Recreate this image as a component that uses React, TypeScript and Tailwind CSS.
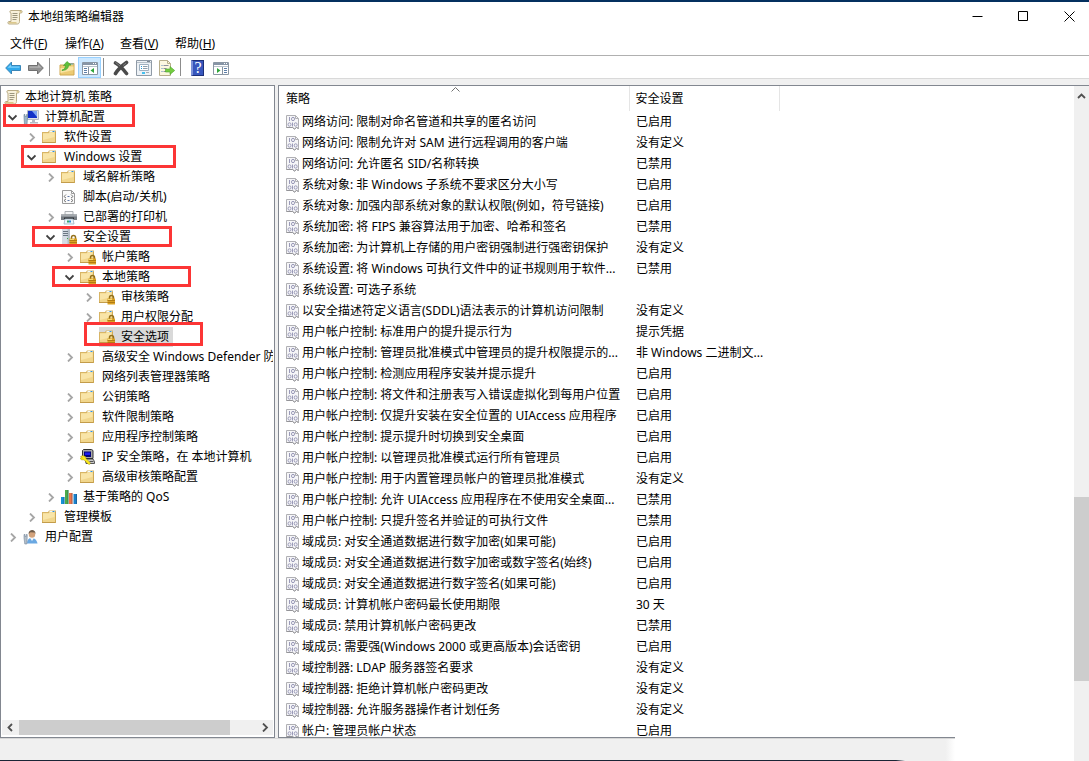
import { useState } from "react";
import type { ReactNode } from "react";
import clsx from "clsx";

type IconName =
  | "scroll"
  | "computer"
  | "folder"
  | "script"
  | "printer"
  | "server"
  | "lockedFolder"
  | "ipsec"
  | "chart"
  | "user";

type TreeNode = {
  label: string;
  icon: IconName;
  depth: number;
  state?: "open" | "closed";
  // outline drawn over the row
  mark?: string;
};

const tree: TreeNode[] = [
  { label: "本地计算机 策略", icon: "scroll", depth: 0 },
  { label: "计算机配置", icon: "computer", depth: 1, state: "open", mark: "left-[2px] w-[132px] -top-[3px] h-[23px]" },
  { label: "软件设置", icon: "folder", depth: 2, state: "closed" },
  { label: "Windows 设置", icon: "folder", depth: 2, state: "open", mark: "left-[20px] w-[155px] -top-[2px] h-[23px]" },
  { label: "域名解析策略", icon: "folder", depth: 3, state: "closed" },
  { label: "脚本(启动/关机)", icon: "script", depth: 3 },
  { label: "已部署的打印机", icon: "printer", depth: 3, state: "closed" },
  { label: "安全设置", icon: "server", depth: 3, state: "open", mark: "left-[31px] w-[140px] -top-px h-[21px]" },
  { label: "帐户策略", icon: "lockedFolder", depth: 4, state: "closed" },
  { label: "本地策略", icon: "lockedFolder", depth: 4, state: "open", mark: "left-[51px] w-[139px] -top-px h-[21px]" },
  { label: "审核策略", icon: "lockedFolder", depth: 5, state: "closed" },
  { label: "用户权限分配", icon: "lockedFolder", depth: 5, state: "closed" },
  { label: "安全选项", icon: "lockedFolder", depth: 5, mark: "left-[83px] w-[119px] -top-[5px] h-[24px]" },
  { label: "高级安全 Windows Defender 防火墙", icon: "folder", depth: 4, state: "closed" },
  { label: "网络列表管理器策略", icon: "folder", depth: 4 },
  { label: "公钥策略", icon: "folder", depth: 4, state: "closed" },
  { label: "软件限制策略", icon: "folder", depth: 4, state: "closed" },
  { label: "应用程序控制策略", icon: "folder", depth: 4, state: "closed" },
  { label: "IP 安全策略，在 本地计算机", icon: "ipsec", depth: 4, state: "closed" },
  { label: "高级审核策略配置", icon: "folder", depth: 4, state: "closed" },
  { label: "基于策略的 QoS", icon: "chart", depth: 3, state: "closed" },
  { label: "管理模板", icon: "folder", depth: 2, state: "closed" },
  { label: "用户配置", icon: "user", depth: 1, state: "closed" },
];

const indent = ["pl-[3px]", "pl-1", "pl-[23px]", "pl-[42px]", "pl-[61px]", "pl-[80px]"];

const policies: [string, string][] = [
  ["网络访问: 限制对命名管道和共享的匿名访问", "已启用"],
  ["网络访问: 限制允许对 SAM 进行远程调用的客户端", "没有定义"],
  ["网络访问: 允许匿名 SID/名称转换", "已禁用"],
  ["系统对象: 非 Windows 子系统不要求区分大小写", "已启用"],
  ["系统对象: 加强内部系统对象的默认权限(例如，符号链接)", "已启用"],
  ["系统加密: 将 FIPS 兼容算法用于加密、哈希和签名", "已禁用"],
  ["系统加密: 为计算机上存储的用户密钥强制进行强密钥保护", "没有定义"],
  ["系统设置: 将 Windows 可执行文件中的证书规则用于软件...", "已禁用"],
  ["系统设置: 可选子系统", ""],
  ["以安全描述符定义语言(SDDL)语法表示的计算机访问限制", "没有定义"],
  ["用户帐户控制: 标准用户的提升提示行为", "提示凭据"],
  ["用户帐户控制: 管理员批准模式中管理员的提升权限提示的...", "非 Windows 二进制文..."],
  ["用户帐户控制: 检测应用程序安装并提示提升", "已启用"],
  ["用户帐户控制: 将文件和注册表写入错误虚拟化到每用户位置", "已启用"],
  ["用户帐户控制: 仅提升安装在安全位置的 UIAccess 应用程序", "已启用"],
  ["用户帐户控制: 提示提升时切换到安全桌面", "已启用"],
  ["用户帐户控制: 以管理员批准模式运行所有管理员", "已启用"],
  ["用户帐户控制: 用于内置管理员帐户的管理员批准模式", "没有定义"],
  ["用户帐户控制: 允许 UIAccess 应用程序在不使用安全桌面...", "已禁用"],
  ["用户帐户控制: 只提升签名并验证的可执行文件", "已禁用"],
  ["域成员: 对安全通道数据进行数字加密(如果可能)", "已启用"],
  ["域成员: 对安全通道数据进行数字加密或数字签名(始终)", "已启用"],
  ["域成员: 对安全通道数据进行数字签名(如果可能)", "已启用"],
  ["域成员: 计算机帐户密码最长使用期限", "30 天"],
  ["域成员: 禁用计算机帐户密码更改", "已禁用"],
  ["域成员: 需要强(Windows 2000 或更高版本)会话密钥", "已启用"],
  ["域控制器: LDAP 服务器签名要求", "没有定义"],
  ["域控制器: 拒绝计算机帐户密码更改", "没有定义"],
  ["域控制器: 允许服务器操作者计划任务", "没有定义"],
  ["帐户: 管理员帐户状态", "已启用"],
];

function Svg({ children, className }: { children: ReactNode; className?: string }) {
  return (
    <svg viewBox="0 0 16 16" className={clsx("size-4 shrink-0", className)} fill="none" aria-hidden="true">
      {children}
    </svg>
  );
}

function FolderShape() {
  return (
    <>
      <path d="M0 3h6l1-1.500h7V14H0z" fill="#d8b566" />
      <path d="M7.500 2H13v2H7.500z" fill="#f0f7fb" />
      <path d="M10.500 2H12.500v1h-2z" fill="#2f8fd8" />
      <path d="M1 4h6l1-1h5.500v10.500H1z" fill="#f1d68c" />
      <path d="M1 4.500h6l1-1h4.500V8L1 11z" fill="#f9e5a8" />
      <path d="M0 13.500h14" stroke="#c39c4a" />
      <path d="M13.500 3v11" stroke="#cda855" />
    </>
  );
}

function Padlock() {
  return (
    <>
      <path d="M10.500 10V8.500a2 2 0 0 1 4 0V10" stroke="#94711c" strokeWidth="1.500" />
      <path d="M8.500 9.500H16v6H8.500z" fill="#dba224" />
      <path d="M8.500 11.500H16M8.500 13.500H16" stroke="#b17c14" />
      <path d="M9 10.500h4" stroke="#f6d873" />
    </>
  );
}

function TreeIcon({ name }: { name: IconName }) {
  switch (name) {
    case "scroll":
      return (
        <Svg>
          <path d="M4 1.500h10c1.500 0 1.500 2.500 0 2.500h-1.500v8.500c0 1.500-1 2.500-2 2.500H2c-1.500 0-1.500-2.500 0-2.500h2V4C2.500 4 2.500 1.500 4 1.500z" fill="#f8f1da" stroke="#b9ab84" />
          <path d="M12.500 3.500h1.500c1 0 1-1.500 0-1.500h-1.500z" fill="#dcc88c" />
          <path d="M2 13h7.500v1.500H2z" fill="#dcc88c" />
          <path d="M5.500 4.500h5M5.500 6.500h5M5.500 8.500h5M5.500 10.500h4" stroke="#9c967e" />
        </Svg>
      );
    case "computer":
      return (
        <Svg>
          <path d="M4.500 1.500h11v9h-11z" fill="#dfe3ea" stroke="#b4bac4" />
          <path d="M5 2h9v7H5z" fill="#1230c8" />
          <path d="M9 2h5v6z" fill="#7ca2f2" />
          <path d="M9 11h3v2H9zM7 13h8v1.500H7z" fill="#b4bac4" />
          <path d="M1 5.500h1v2h1.500v-2h1v3L4 15.500H1.500L1 8.500z" fill="#9db6c8" stroke="#688296" strokeWidth=".6" />
        </Svg>
      );
    case "folder":
      return (
        <Svg>
          <FolderShape />
        </Svg>
      );
    case "lockedFolder":
      return (
        <Svg>
          <FolderShape />
          <Padlock />
        </Svg>
      );
    case "script":
      return (
        <Svg>
          <path d="M1.500 1.500h9l3 3v10h-12z" fill="#fafafa" stroke="#9a9a9a" />
          <path d="M10.500 1.500v3h3" stroke="#9a9a9a" />
          <path d="M5 5.500L3 7.500 5 9M10 5.500l2 2L10 9M5 10L3 11.500l2 1.500M10 10l2 1.500-2 1.500" stroke="#6c6c6c" strokeWidth=".9" />
          <path d="M6.500 7.500h2M6.500 11.500h2" stroke="#6078a8" />
        </Svg>
      );
    case "printer":
      return (
        <Svg>
          <path d="M4 2.500h8V6H4z" fill="#f4f5f6" stroke="#9ba0a5" strokeWidth=".8" />
          <path d="M0 5.500h16V11H0z" fill="#777d83" />
          <path d="M0 5.500h16v2H0z" fill="#a5aaaf" />
          <path d="M3 8.500h10v1.500H3z" fill="#2d3135" />
          <path d="M4 10h8l1 5H3z" fill="#edf6fb" stroke="#9cb0be" strokeWidth=".8" />
          <path d="M6 11.500h2v2H6z" fill="#39a36b" />
          <path d="M8 11.500h2v2H8z" fill="#2f8ed8" />
        </Svg>
      );
    case "server":
      return (
        <Svg>
          <path d="M1 0h8v15H1z" fill="#b4bec9" />
          <path d="M1 0h5.500v15H1z" fill="#d5dce4" />
          <path d="M2 2.500h5M2 4.500h5M2 6.500h5" stroke="#6a7683" />
          <path d="M6 9h1v1H6z" fill="#3fa84a" />
          <Padlock />
        </Svg>
      );
    case "ipsec":
      return (
        <Svg>
          <path d="M2.500 1.500l1-1h8l1.500 1v8H2.500z" fill="#a9a9a9" stroke="#333" />
          <path d="M4 2.500h7V8H4z" fill="#050578" />
          <path d="M5 3.500h5V6H5z" fill="#1c1cf0" />
          <path d="M5 10h8l1.500 2.500v2H6z" fill="#c8c8c8" stroke="#333" strokeWidth=".8" />
          <path d="M9.500 12.500h4" stroke="#555" />
          <path d="M.5 7.500L2.500 6.500l3 1 .5 2L10.500 14l-1 1.500L8 15l-4-4.200L1.500 11 0 9l2.200-.2z" fill="#fbe91c" stroke="#978600" strokeWidth=".4" />
        </Svg>
      );
    case "chart":
      return (
        <Svg>
          <path d="M0 8h3.500v7H0z" fill="#1693d6" />
          <path d="M4 1h3.500v14H4z" fill="#4bab4a" />
          <path d="M8 4h3.500v11H8z" fill="#f07446" />
          <path d="M12.500 5H16v10h-3.500z" fill="#1a80ca" />
          <path d="M3 8v7M7 1v14M11 4v11M15.500 5v10" stroke="#1c3f66" strokeOpacity=".4" />
        </Svg>
      );
    case "user":
      return (
        <Svg>
          <path d="M4 14.500C4 11 5.500 9 8.500 9s5 1.500 6 5.500z" fill="#6aa8e2" />
          <path d="M7 9l2 3 2-3z" fill="#f4f8fb" />
          <circle cx="9" cy="5.500" r="3.200" fill="#d3a37c" />
          <path d="M5.500 5c0-5.500 7.500-5.500 7 0l-1-1.500-4-.3z" fill="#6f5b48" />
          <path d="M1 5.500h1v2h1.200v-2h1v3L3.800 15H1.800L1 9z" fill="#b4bfc9" stroke="#76869a" strokeWidth=".6" />
        </Svg>
      );
  }
}

function PolicyIcon() {
  return (
    <svg viewBox="0 0 14 16" className="h-4 w-[14px] shrink-0" fill="none" aria-hidden="true">
      <path d="M.5 1.500h9l3 3v10l-2-1-2 1.500-2-1.500h-6z" fill="#f6f6f8" stroke="#b0b0b4" />
      <path d="M9.500 1.500v3h3" stroke="#b0b0b4" />
      <path d="M.5 13.500h6l2 1.500 2-1.500 2 1" stroke="#949498" />
      <path d="M3.500 3v4M6.500 8.500v4" stroke="#9a9ab8" />
      <ellipse cx="7" cy="5" rx="1.500" ry="1.700" stroke="#9a9ab8" />
      <ellipse cx="3.500" cy="10.500" rx="1.500" ry="1.700" stroke="#9a9ab8" />
      <ellipse cx="9.700" cy="10.500" rx="1.500" ry="1.700" stroke="#9a9ab8" />
    </svg>
  );
}

function Arrow({ dir, className }: { dir: "up" | "left" | "right" | "down"; className?: string }) {
  const d = {
    up: "M1 6l3.500-3.500L8 6",
    down: "M.5 2.500l4 4 4-4",
    left: "M6 1L2.500 4.500 6 8",
    right: "M3 .5l4 4-4 4",
  }[dir];
  return (
    <svg viewBox="0 0 9 9" className={clsx("size-[9px]", className)} fill="none" stroke="currentColor" strokeWidth="1.800" aria-hidden="true">
      <path d={d} />
    </svg>
  );
}

function PaneIcon({ flip }: { flip?: boolean }) {
  return (
    <Svg>
      <path d="M.5 2.500h15v12H.5z" fill="#fff" stroke="#8b97a4" />
      <path d="M1 3h14v2H1z" fill="#8795a6" />
      <path d="M11 3.500h1M13 3.500h1" stroke="#fff" />
      <path d="M1 6.500h14" stroke="#b9c2cc" />
      {flip ? (
        <>
          <path d="M9.500 7v7" stroke="#8592a0" />
          <path d="M4 8l3.500 2.500L4 13z" fill="#2fa53a" />
          <path d="M11 8.500h3M11 10.500h3M11 12.500h3" stroke="#5d7ea8" />
        </>
      ) : (
        <>
          <path d="M6.500 7v7" stroke="#8592a0" />
          <path d="M12 8l-3.500 2.500L12 13z" fill="#2fa53a" />
          <path d="M2 8.500h3M2 10.500h3M2 12.500h3" stroke="#5d7ea8" />
        </>
      )}
    </Svg>
  );
}

function ToolButton({ label, active, children }: { label: string; active?: boolean; children: ReactNode }) {
  return (
    <button
      type="button"
      aria-label={label}
      aria-pressed={active}
      className={clsx(
        "flex h-[21px] w-[23px] items-center justify-center border",
        active ? "border-[#99d1ff] bg-[#cce8ff]" : "border-transparent hover:bg-[#e5f3ff]"
      )}
    >
      {children}
    </button>
  );
}

function ToolSeparator() {
  return <span className="mr-[5px] ml-[2px] h-[18px] w-px self-center bg-[#8c8c8c]" />;
}

function Toolbar() {
  return (
    <div role="toolbar" className="flex h-[23px] items-end border-b border-[#d9d9d9] pl-px">
      <ToolButton label="后退">
        <Svg>
          <path d="M.7 8L6.500 2v3.500h9v5h-9V14z" fill="#2fa9ec" stroke="#3a86b8" />
          <path d="M2.500 7.800L6 4.500v2h8.500v1.300z" fill="#7fd0fa" />
        </Svg>
      </ToolButton>
      <ToolButton label="前进">
        <Svg>
          <path d="M15.300 8L9.500 2v3.500h-9v5h9V14z" fill="#929292" stroke="#707070" />
          <path d="M13.500 7.800L10 4.500v2H1.500v1.300z" fill="#b5b5b5" />
        </Svg>
      </ToolButton>
      <ToolSeparator />
      <ToolButton label="向上">
        <Svg>
          <path d="M1 5h6l1-1.500h7V15H1z" fill="#eccb74" stroke="#d0a850" />
          <path d="M11 3.500h3.500v1H11z" fill="#58a9df" />
          <path d="M1.500 8H8l1-1.500h5.500V10l-13 3z" fill="#fae5a4" />
          <path d="M3 10C5.500 9.500 6.500 7.500 6.500 5.500h-2L8 1.500l4 3.500-2.500.3C9.500 8.500 7 10.500 3 10.500z" fill="#5fc03c" stroke="#3b9a28" strokeWidth=".6" />
        </Svg>
      </ToolButton>
      <ToolButton label="显示/隐藏控制台树" active>
        <PaneIcon />
      </ToolButton>
      <ToolSeparator />
      <ToolButton label="删除">
        <Svg>
          <path d="M2.500 3c3 1.500 7.500 6 11 10.500M13.500 2.500C10 5 5 9.500 2.500 13.500" stroke="#4a4a4a" strokeWidth="3.600" strokeLinecap="round" />
          <path d="M2.500 2.500L7 6M13 3l-3 2.500" stroke="#808080" strokeWidth="1" />
        </Svg>
      </ToolButton>
      <ToolButton label="属性">
        <Svg>
          <path d="M.5.5h15v15H.5z" fill="#edf1f5" stroke="#8f9aa6" />
          <path d="M1 2.500h14" stroke="#b5bfc9" />
          <path d="M11 1.500h3" stroke="#7d8894" />
          <path d="M3.500 4.500h9v6h-9z" fill="#fff" stroke="#9fb0c0" />
          <path d="M5 6.500h1M5 8.500h1" stroke="#2196d8" />
          <path d="M7 6.500h4.500M7 8.500h4.500" stroke="#8f9dab" />
          <path d="M6 12h3v2H6z" fill="#43c0f0" />
          <path d="M10 12.500h3" stroke="#a4adb6" />
        </Svg>
      </ToolButton>
      <ToolButton label="导出列表">
        <Svg>
          <path d="M.5.5h8l3 3v12H.5z" fill="#fcf7e0" stroke="#b8ae8c" />
          <path d="M8.500.5v3h3" stroke="#b8ae8c" />
          <path d="M2.500 5.500h1M2.500 8.500h1M2.500 11.500h1" stroke="#5a8ac0" />
          <path d="M4.500 5.500h5M4.500 8.500h3M4.500 11.500h3" stroke="#8f8f9c" />
          <path d="M6.500 9H11V6.500l4.700 4-4.700 4V12H6.500z" fill="#74cc40" stroke="#4ca42c" strokeWidth=".6" />
        </Svg>
      </ToolButton>
      <ToolSeparator />
      <ToolButton label="帮助">
        <span className="flex h-4 w-[13px] items-center justify-center border border-[#1c2f78] border-l-[#7c92d8] border-l-2 bg-[#3756bd] font-['Liberation_Serif',serif] text-base text-white">
          ?
        </span>
      </ToolButton>
      <ToolButton label="显示/隐藏操作窗格">
        <PaneIcon flip />
      </ToolButton>
    </div>
  );
}

function TreePane() {
  const [selected, setSelected] = useState("安全选项");

  return (
    <nav aria-label="控制台树" className="flex w-[275px] shrink-0 flex-col border border-[#828790] bg-white">
      <ul role="tree" className="mr-px flex-1 overflow-hidden pt-px">
        {tree.map((node) => (
          <li
            key={node.label}
            role="treeitem"
            aria-selected={selected === node.label}
            aria-expanded={node.state ? node.state === "open" : undefined}
            className={clsx("relative flex h-5 items-center whitespace-nowrap", indent[node.depth])}
          >
            {node.depth > 0 && (
              <span className="flex w-[18px] shrink-0 items-center pl-[3px]">
                {node.state && (
                  <button type="button" aria-label={node.state === "open" ? "折叠" : "展开"}>
                    <Arrow
                      dir={node.state === "open" ? "down" : "right"}
                      className={node.state === "open" ? "text-[#404040]" : "text-[#a6a6a6]"}
                    />
                  </button>
                )}
              </span>
            )}
            <button
              type="button"
              onClick={() => setSelected(node.label)}
              className={clsx(
                "flex h-5 items-center pr-1",
                node.depth > 0 ? "gap-[6px]" : "gap-[5px]",
                selected === node.label && "bg-[#d9d9d9]"
              )}
            >
              <TreeIcon name={node.icon} />
              {node.label}
            </button>
            {node.mark && (
              <span className={clsx("pointer-events-none absolute z-10 border-[3px] border-[#fc3535]", node.mark)} />
            )}
          </li>
        ))}
      </ul>
      <div className="mx-px mb-[2px] flex h-[15px] items-center bg-[#f0f0f0] text-[#505050]">
        <button type="button" aria-label="向左滚动" className="flex w-[17px] justify-center">
          <Arrow dir="left" />
        </button>
        <div className="h-full flex-1">
          <div className="h-full w-[89%] bg-[#cdcdcd]" />
        </div>
        <button type="button" aria-label="向右滚动" className="flex w-[17px] justify-center">
          <Arrow dir="right" />
        </button>
      </div>
    </nav>
  );
}

function PolicyList() {
  return (
    <section className="flex min-w-0 flex-1 flex-col border-t border-l border-[#828790] bg-white">
      <div className="min-h-0 flex-1 overflow-hidden">
        <table className="w-full table-fixed border-collapse text-left">
          <colgroup>
            <col className="w-[350px]" />
            <col className="w-[150px]" />
            <col />
          </colgroup>
          <thead>
            <tr className="h-[25px]">
              <th className="relative border-r border-[#e5e5e5] p-0 pl-[7px] font-normal">
                策略
                <svg viewBox="0 0 9 5" className="absolute top-px left-[172px] h-[5px] w-[9px]" fill="none" stroke="#707070" aria-hidden="true">
                  <path d="M.5 4.500l4-4 4 4" />
                </svg>
              </th>
              <th className="border-r border-[#e5e5e5] p-0 pl-[6px] font-normal">安全设置</th>
              <th className="p-0" />
            </tr>
          </thead>
          <tbody>
            {policies.map(([name, value]) => (
              <tr key={name} className="h-[21px]">
                <td className="p-0 pl-[7px]">
                  <div className="flex items-center gap-[2px] whitespace-nowrap">
                    <PolicyIcon />
                    {name}
                  </div>
                </td>
                <td className="p-0 pl-[7px] whitespace-nowrap">{value}</td>
                <td className="p-0" />
              </tr>
            ))}
          </tbody>
        </table>
      </div>
      <div className="mr-[119px] h-px shrink-0 bg-[#828790]" />
    </section>
  );
}

export default function App() {
  return (
    <div className="flex h-screen flex-col overflow-hidden bg-white font-['Noto_Sans','Noto_Sans_CJK_SC',sans-serif] text-[12px] leading-4 text-black">
      <div className="h-[2px] shrink-0 bg-[#04305f]" />
      <header className="shrink-0">
        <div className="flex h-[30px] items-center pr-[14px] pl-[7px]">
          <TreeIcon name="scroll" />
          <h1 className="flex-1 pl-[5px]">本地组策略编辑器</h1>
          <div className="flex gap-[35px] pb-[2px]">
            <button type="button" aria-label="最小化">
              <svg viewBox="0 0 11 11" className="size-[11px]" stroke="#000" fill="none">
                <path d="M.5 5.500h10" />
              </svg>
            </button>
            <button type="button" aria-label="最大化">
              <svg viewBox="0 0 11 11" className="size-[11px]" stroke="#000" fill="none">
                <path d="M.5.5h9v9h-9z" />
              </svg>
            </button>
            <button type="button" aria-label="关闭">
              <svg viewBox="0 0 11 11" className="size-[11px]" stroke="#000" fill="none">
                <path d="M.5.5l10 10M10.500.5l-10 10" />
              </svg>
            </button>
          </div>
        </div>
        <div role="menubar" className="flex h-6 items-center border-b border-[#b0b0b0] pl-[10px]">
          {[
            ["文件", "F"],
            ["操作", "A"],
            ["查看", "V"],
            ["帮助", "H"],
          ].map(([name, key]) => (
            <button key={key} type="button" role="menuitem" className="w-[55px] text-left">
              {name}(<u>{key}</u>)
            </button>
          ))}
        </div>
        <Toolbar />
        <div className="h-[6px] bg-[#f0f0f0]" />
      </header>

      <div className="flex min-h-0 flex-1">
        <div className="flex min-w-0 flex-1 flex-col">
          <main className="flex min-h-0 flex-1">
            <TreePane />
            <div className="w-[3px] shrink-0 bg-[#f0f0f0]" />
            <PolicyList />
          </main>
          <footer className="mr-[119px] flex h-[23px] shrink-0 flex-col justify-between bg-linear-to-r from-[#f0f0f0] from-99% to-white">
            <div className="h-px bg-[#d7d7d7]" />
            <div className="mr-[50px] h-px bg-linear-to-r from-[#1a2535] from-99% to-[#f0f0f0]" />
          </footer>
        </div>
        <div className="flex w-[15px] shrink-0 flex-col items-center border-t border-[#828790] bg-[#f0f0f0]">
          <button type="button" aria-label="向上滚动" className="pt-[6px] text-[#505050]">
            <Arrow dir="up" />
          </button>
          <div className="mt-auto mb-20 h-[184px] w-full bg-[#cdcdcd]" />
        </div>
      </div>
    </div>
  );
}
